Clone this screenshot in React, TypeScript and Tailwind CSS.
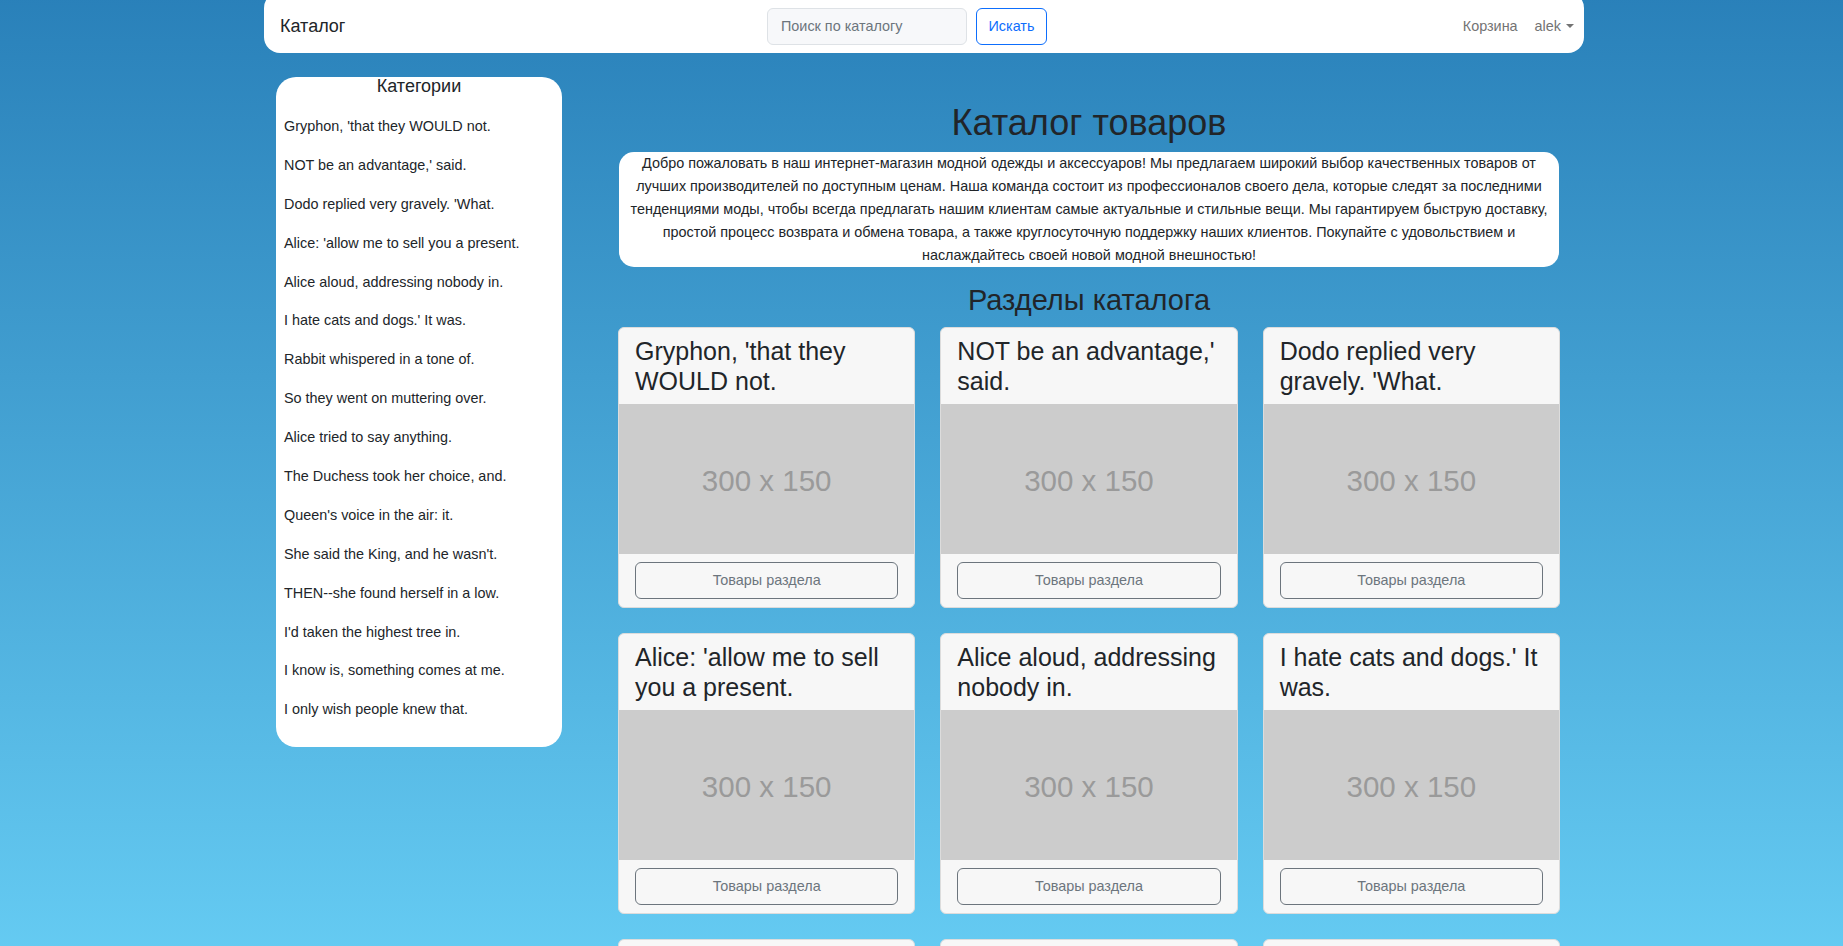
import React from "react";

const cats = [
  "Gryphon, 'that they WOULD not.",
  "NOT be an advantage,' said.",
  "Dodo replied very gravely. 'What.",
  "Alice: 'allow me to sell you a present.",
  "Alice aloud, addressing nobody in.",
  "I hate cats and dogs.' It was.",
  "Rabbit whispered in a tone of.",
  "So they went on muttering over.",
  "Alice tried to say anything.",
  "The Duchess took her choice, and.",
  "Queen's voice in the air: it.",
  "She said the King, and he wasn't.",
  "THEN--she found herself in a low.",
  "I'd taken the highest tree in.",
  "I know is, something comes at me.",
  "I only wish people knew that.",
];

const intro =
  "Добро пожаловать в наш интернет-магазин модной одежды и аксессуаров! Мы предлагаем широкий выбор качественных товаров от лучших производителей по доступным ценам. Наша команда состоит из профессионалов своего дела, которые следят за последними тенденциями моды, чтобы всегда предлагать нашим клиентам самые актуальные и стильные вещи. Мы гарантируем быструю доставку, простой процесс возврата и обмена товара, а также круглосуточную поддержку наших клиентов. Покупайте с удовольствием и наслаждайтесь своей новой модной внешностью!";

function Card({ title }: { title: string }) {
  return (
    <div className="flex flex-col overflow-hidden rounded-[6px] border border-[#dcdcdc] bg-[#f7f7f7]">
      <div className="px-4 pt-2 pb-2 text-[25px] leading-[30px] text-[#212529] min-h-[76px]">
        {title}
      </div>
      <div className="flex h-[150px] items-center justify-center bg-[#cccccc] pt-[5px] text-[29.5px] text-[#9a9a9a]">
        300 x 150
      </div>
      <div className="px-4 pt-[8px] pb-[8px]">
        <button className="flex h-[37px] w-full items-center justify-center rounded-[6px] border border-[#6c757d] text-[14.4px] text-[#6c757d]">
          Товары раздела
        </button>
      </div>
    </div>
  );
}

export default function App() {
  return (
    <div
      className="min-h-screen bg-[linear-gradient(to_bottom,#2980b9_0px,#6dd5fa_1090px,#ffffff_2180px)] pb-10 text-[#212529]"
      style={{ fontFamily: '"Liberation Sans", Arial, sans-serif' }}
    >
      <nav className="-mt-2 ml-[264px] grid h-[61px] w-[1320px] grid-cols-[487px_280px_1fr] items-center rounded-2xl bg-white pt-2 pl-4 pr-[10px]">
        <span className="text-[18px] text-[#212529]">Каталог</span>
        <div className="flex items-center gap-[9px]">
          <div className="flex h-[37px] w-[200px] items-center rounded-[6px] border border-[#dee2e6] bg-[#f7f8fa] pl-[13px] text-[14.4px] text-[#6c757d]">
            Поиск по каталогу
          </div>
          <button className="flex h-[37px] w-[71px] items-center justify-center rounded-[6px] border border-[#0d6efd] bg-white text-[14.4px] text-[#0d6efd]">
            Искать
          </button>
        </div>
        <div className="flex items-center justify-end gap-[17px] text-[14.4px] text-[#737373]">
          <span>Корзина</span>
          <span className="flex items-center">
            alek
            <span className="ml-[5px] inline-block h-0 w-0 border-x-[4.3px] border-t-[4.3px] border-b-0 border-x-transparent border-t-[#737373]" />
          </span>
        </div>
      </nav>

      <div className="ml-[264px] mt-[24px] flex w-[1320px] items-start px-3">
        <aside className="w-[286px] rounded-[20px] bg-white pb-[27px]">
          <div className="text-center text-[18px] leading-[19px] text-[#212529]">Категории</div>
          <div className="mt-[19px] flex flex-col gap-[16.9px] pl-2">
            {cats.map((c) => (
              <p key={c} className="text-[14.4px] leading-[22px] text-[#212529]">
                {c}
              </p>
            ))}
          </div>
        </aside>

        <main className="ml-[56px] w-[942px] pt-[25px]">
          <h1 className="text-center text-[36px] leading-[42px] text-[#212529]">Каталог товаров</h1>
          <div className="mx-px mt-[8px] rounded-[15px] bg-white px-[10px] text-center text-[14.4px] leading-[23px] text-[#212529]">
            {intro}
          </div>
          <h2 className="mt-[16px] text-center text-[29px] leading-[34px] text-[#212529]">Разделы каталога</h2>
          <div className="mt-[10px] grid grid-cols-3 gap-x-[25px] gap-y-[25px]">
            {cats.map((c) => (
              <Card key={c} title={c} />
            ))}
          </div>
        </main>
      </div>
    </div>
  );
}
